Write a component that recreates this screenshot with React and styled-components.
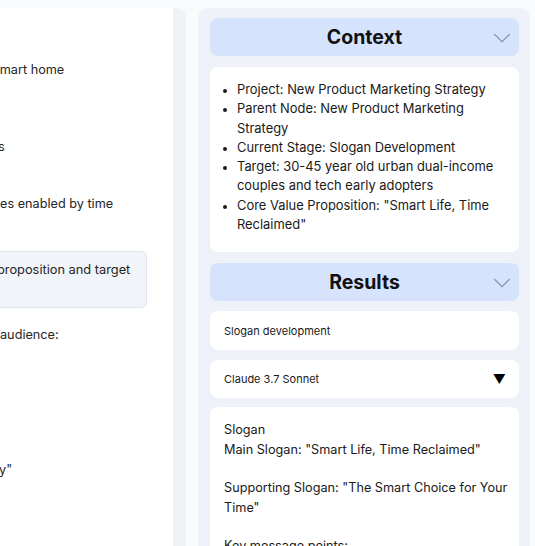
import React from "react";
import styled, { createGlobalStyle } from "styled-components";
import { ChevronDown } from "lucide-react";

const GlobalStyle = createGlobalStyle`
  html, body {
    margin: 0;
    padding: 0;
    background: #f8fafc;
    font-family: Inter, "Noto Sans", sans-serif;
    color: #1a1a1a;
    overflow: hidden;
  }
`;

const contextItems = [
  "Project: New Product Marketing Strategy",
  "Parent Node: New Product Marketing Strategy",
  "Current Stage: Slogan Development",
  "Target: 30-45 year old urban dual-income couples and tech early adopters",
  'Core Value Proposition: "Smart Life, Time Reclaimed"',
];

function App() {
  return (
    <Page>
      <GlobalStyle />
      <LeftColumn>
        <LeftCard>
          <Line $top={52} $shift={-7}>smart home</Line>
          <Line $top={57} $shift={-2}>s</Line>
          <Line $top={37} $shift={0}>es enabled by time</Line>
          <Quote>
            <Line $shift={-3}>proposition and target</Line>
          </Quote>
          <Line $top={17} $shift={0}>audience:</Line>
          <Line $top={115} $shift={-1}>y"</Line>
        </LeftCard>
      </LeftColumn>

      <Panel>
        <SectionHeader>
          <Title>Context</Title>
          <Chevron size={30} strokeWidth={0.9} />
        </SectionHeader>
        <Card $pad="13px 16px 18px 12px" $top={1}>
          <List>
            {contextItems.map((item, i) => (
              <li key={i}>{item}</li>
            ))}
          </List>
        </Card>

        <SectionHeader $top={1}>
          <Title>Results</Title>
          <Chevron size={30} strokeWidth={0.9} />
        </SectionHeader>
        <Field $h={39}>Slogan development</Field>
        <Field $h={38}>
          Claude 3.7 Sonnet
          <Arrow>▼</Arrow>
        </Field>
        <Card $pad="13px 10px 12px 14px" $top={-1}>
          <Body>
            Slogan
            <br />
            Main Slogan: "Smart Life, Time Reclaimed"
            <br />
            <br />
            Supporting Slogan: "The Smart Choice for Your Time"
            <br />
            <br />
            Key message points:
          </Body>
        </Card>
      </Panel>
    </Page>
  );
}

export default App;

const Page = styled.div`
  display: flex;
  align-items: flex-start;
  gap: 12px;
  height: 546px;
  padding-top: 8px;
  box-sizing: border-box;
  overflow: hidden;
`;

const LeftColumn = styled.div`
  width: 186px;
  flex-shrink: 0;
  height: 560px;
  background: #eef1f5;
  border-top-right-radius: 10px;
  padding-right: 13px;
  box-sizing: border-box;
  overflow: hidden;
`;

const LeftCard = styled.div`
  height: 100%;
  background: #ffffff;
  display: flex;
  flex-direction: column;
  font-size: 12.7px;
  color: #262626;
  overflow: hidden;
`;

const Line = styled.div`
  line-height: 20px;
  white-space: nowrap;
  margin-top: ${(p) => p.$top || 0}px;
  margin-left: ${(p) => p.$shift || 0}px;
`;

const Quote = styled.div`
  margin-top: 37px;
  margin-right: 26px;
  height: 57px;
  box-sizing: border-box;
  padding-top: 8px;
  font-size: 12.8px;
  background: #f1f4f8;
  border: 1px solid #dfe4ea;
  border-left: none;
  border-radius: 0 6px 6px 0;
  overflow: hidden;
`;

const Panel = styled.div`
  width: 332px;
  flex-shrink: 0;
  height: 560px;
  background: #eef2f8;
  border-radius: 10px 10px 0 0;
  padding: 10px 11px 0 12px;
  box-sizing: border-box;
  display: flex;
  flex-direction: column;
  gap: 10px;
`;

const SectionHeader = styled.div`
  position: relative;
  height: 38px;
  flex-shrink: 0;
  margin-top: ${(p) => p.$top || 0}px;
  box-sizing: border-box;
  background: #d5e3fc;
  border-radius: 8px;
  display: flex;
  align-items: center;
  justify-content: center;
`;

const Title = styled.h2`
  margin: 0;
  font-size: 19.5px;
  font-weight: 700;
  color: #111111;
`;

const Chevron = styled(ChevronDown)`
  position: absolute;
  right: 2px;
  top: 5px;
  color: #8797b0;
`;

const Card = styled.div`
  background: #ffffff;
  border-radius: 8px;
  padding: ${(p) => p.$pad};
  margin-top: ${(p) => p.$top || 0}px;
  flex-shrink: 0;
`;

const List = styled.ul`
  margin: 0;
  padding-left: 15px;
  font-size: 12.9px;
  line-height: 19.3px;
  color: #1a1a1a;

  li::marker {
    font-size: 11px;
  }
`;

const Field = styled.div`
  height: ${(p) => p.$h}px;
  flex-shrink: 0;
  background: #ffffff;
  border-radius: 8px;
  padding: 0 13px 0 14px;
  box-sizing: border-box;
  display: flex;
  align-items: center;
  justify-content: space-between;
  font-size: 11px;
  color: #1a1a1a;
`;

const Arrow = styled.span`
  font-size: 13px;
  color: #000000;
`;

const Body = styled.div`
  font-size: 12.7px;
  line-height: 19.3px;
  color: #1a1a1a;
`;
